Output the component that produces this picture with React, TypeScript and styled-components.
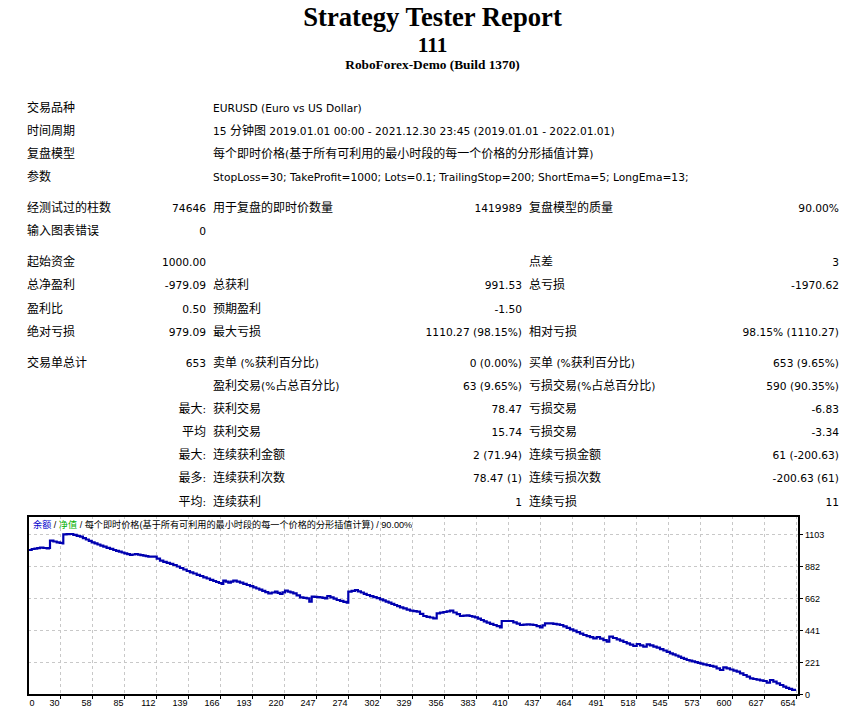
import React from "react";
import styled, { createGlobalStyle } from "styled-components";

const Global = createGlobalStyle`
  html, body { margin: 0; padding: 0; background: #ffffff; }
  body {
    font-family: "DejaVu Sans", "Noto Sans CJK SC", sans-serif;
    color: #000000;
  }
`;

const Page = styled.div`
  width: 865px;
  padding-top: 2px;
`;

const Heading = styled.div<{ $size: number; $lh: number }>`
  font-family: "Liberation Serif", "Times New Roman", serif;
  font-weight: bold;
  font-size: ${(p) => p.$size}px;
  line-height: ${(p) => p.$lh}px;
  text-align: center;
`;

const Report = styled.div`
  box-sizing: border-box;
  width: 820px;
  margin: 22px 0 0 23px;
  padding: 1px;
  display: grid;
  grid-template-columns: 120px 64px 150px 164px 150px 165px;
  gap: 1px;
  font-size: 10.67px;
  line-height: 16.15px;
`;

const Cell = styled.div<{ $span: number; $right: boolean }>`
  grid-column: span ${(p) => p.$span};
  padding: 5px 3px 1px 3px;
  text-align: ${(p) => (p.$right ? "right" : "left")};
  white-space: nowrap;
`;

const Spacer = styled.div`
  grid-column: 1 / -1;
  height: 6.7px;
`;

const Han = styled.span`
  font-family: "Noto Sans CJK SC", sans-serif;
  font-size: 12px;
  line-height: 1;
`;

const ChartBox = styled.div`
  width: 820px;
  height: 200px;
  margin-left: 23px;
`;

const ChartSvg = styled.svg`
  display: block;
  overflow: visible;
`;

const CJK = /([\u2E80-\u9FFF\uFF00-\uFFEF]+)/;

function Txt({ s }: { s: string }) {
  return (
    <>
      {s.split(CJK).map((part, i) =>
        part === "" ? null : CJK.test(part) ? <Han key={i}>{part}</Han> : <React.Fragment key={i}>{part}</React.Fragment>
      )}
    </>
  );
}

type C = { t?: string; span?: number; r?: boolean };
type Row = C[] | "gap";

const rows: Row[] = [
  [{ t: "交易品种", span: 2 }, { t: "EURUSD (Euro vs US Dollar)", span: 4 }],
  [{ t: "时间周期", span: 2 }, { t: "15 分钟图 2019.01.01 00:00 - 2021.12.30 23:45 (2019.01.01 - 2022.01.01)", span: 4 }],
  [{ t: "复盘模型", span: 2 }, { t: "每个即时价格(基于所有可利用的最小时段的每一个价格的分形插值计算)", span: 4 }],
  [{ t: "参数", span: 2 }, { t: "StopLoss=30; TakeProfit=1000; Lots=0.1; TrailingStop=200; ShortEma=5; LongEma=13;", span: 4 }],
  "gap",
  [{ t: "经测试过的柱数" }, { t: "74646", r: true }, { t: "用于复盘的即时价数量" }, { t: "1419989", r: true }, { t: "复盘模型的质量" }, { t: "90.00%", r: true }],
  [{ t: "输入图表错误" }, { t: "0", r: true }, { span: 4 }],
  "gap",
  [{ t: "起始资金" }, { t: "1000.00", r: true }, {}, {}, { t: "点差" }, { t: "3", r: true }],
  [{ t: "总净盈利" }, { t: "-979.09", r: true }, { t: "总获利" }, { t: "991.53", r: true }, { t: "总亏损" }, { t: "-1970.62", r: true }],
  [{ t: "盈利比" }, { t: "0.50", r: true }, { t: "预期盈利" }, { t: "-1.50", r: true }, {}, {}],
  [{ t: "绝对亏损" }, { t: "979.09", r: true }, { t: "最大亏损" }, { t: "1110.27 (98.15%)", r: true }, { t: "相对亏损" }, { t: "98.15% (1110.27)", r: true }],
  "gap",
  [{ t: "交易单总计" }, { t: "653", r: true }, { t: "卖单 (%获利百分比)" }, { t: "0 (0.00%)", r: true }, { t: "买单 (%获利百分比)" }, { t: "653 (9.65%)", r: true }],
  [{ span: 2 }, { t: "盈利交易(%占总百分比)" }, { t: "63 (9.65%)", r: true }, { t: "亏损交易(%占总百分比)" }, { t: "590 (90.35%)", r: true }],
  [{ t: "最大:", span: 2, r: true }, { t: "获利交易" }, { t: "78.47", r: true }, { t: "亏损交易" }, { t: "-6.83", r: true }],
  [{ t: "平均", span: 2, r: true }, { t: "获利交易" }, { t: "15.74", r: true }, { t: "亏损交易" }, { t: "-3.34", r: true }],
  [{ t: "最大:", span: 2, r: true }, { t: "连续获利金额" }, { t: "2 (71.94)", r: true }, { t: "连续亏损金额" }, { t: "61 (-200.63)", r: true }],
  [{ t: "最多:", span: 2, r: true }, { t: "连续获利次数" }, { t: "78.47 (1)", r: true }, { t: "连续亏损次数" }, { t: "-200.63 (61)", r: true }],
  [{ t: "平均:", span: 2, r: true }, { t: "连续获利" }, { t: "1", r: true }, { t: "连续亏损" }, { t: "11", r: true }],
];

/* chart geometry (local to chart box) */
const FL = 5;
const FR = 776;
const FT = 3;
const FB = 182;
const vGrid = Array.from({ length: 24 }, (_, k) => 37 + 32 * k);
const hGrid = [21, 53, 85, 117, 149];
const yLabels: [string, number][] = [
  ["1103", 21],
  ["882", 53],
  ["662", 85],
  ["441", 117],
  ["221", 149],
  ["0", 181],
];
const xLabels = ["30", "58", "85", "112", "139", "166", "193", "220", "247", "274", "302", "329", "356", "383", "410", "437", "464", "491", "518", "545", "573", "600", "627", "654"];

const curve: [number, number][] = [
  [5.3, 37], [8.7, 36], [17, 34.7], [23.7, 35.3], [26, 35], [27, 27.7], [33.7, 29.3], [39.7, 30.3],
  [40.3, 21.3], [47, 21], [57, 23.7], [68.7, 29.3], [80.3, 33.7], [90.3, 37], [107, 42], [112, 41],
  [120.3, 42.7], [125.3, 43.7], [130.3, 43.7], [137, 47.7], [150.3, 52], [163.7, 58], [177, 63],
  [190.3, 68], [198.7, 71], [200.3, 67.7], [205.3, 69.7], [210.3, 67.7], [217, 69.7], [230.3, 74.3],
  [245.3, 80.3], [252, 78.7], [257, 81], [262, 77.7], [270.3, 80.3], [277, 84.3], [283.7, 85.3],
  [286.3, 88.7], [288.7, 83.7], [297, 84.3], [302, 85.3], [304.3, 83], [313.7, 87], [323.7, 89.7],
  [325.3, 78.7], [332, 77], [343.7, 82], [357, 86.3], [377, 94.3], [387, 97.7], [393.7, 98.7],
  [400.3, 103], [410.3, 105.3], [413.7, 100.3], [427, 97.7], [437, 103], [443.7, 102.3], [452, 104.3],
  [463.7, 109.7], [477, 114.3], [478.7, 108], [487, 108], [497, 112], [503.7, 111.3], [510.3, 112],
  [517, 114.3], [522, 110.3], [527, 110.3], [537, 112], [547, 116.3], [560.3, 122], [570.3, 125.3],
  [573.7, 124], [583.7, 128.7], [586.3, 123.7], [593.7, 126.3], [603.7, 130.3], [610.3, 133],
  [613.7, 131], [620.3, 133.7], [623.7, 131.3], [633.7, 134.7], [647, 140.3], [663.7, 147],
  [680.3, 151.3], [690.3, 153.7], [697, 157], [700.3, 154.3], [713.7, 158.7], [727, 165.3],
  [740.3, 168], [743.7, 169.7], [747, 167], [760.3, 173.7], [772, 178],
];

function stairPath(pts: [number, number][]): string {
  let d = `M${pts[0][0]} ${pts[0][1]}`;
  for (let i = 1; i < pts.length; i++) {
    const [x0, y0] = pts[i - 1];
    const [x1, y1] = pts[i];
    const dx = x1 - x0;
    if (dx <= 3) {
      d += ` H${x1.toFixed(1)} V${y1.toFixed(1)}`;
      continue;
    }
    const n = Math.round(dx / 3);
    for (let s = 1; s <= n; s++) {
      const x = x0 + (dx * s) / n;
      const y = y0 + ((y1 - y0) * s) / n;
      d += ` H${x.toFixed(1)} V${y.toFixed(1)}`;
    }
  }
  return d;
}

function Chart() {
  const path = stairPath(curve);
  return (
    <ChartBox>
      <ChartSvg width={820} height={200} viewBox="0 0 820 200">
        <g stroke="#c8c8c8" strokeWidth={1} strokeDasharray="3 3" shapeRendering="crispEdges">
          {vGrid.map((x) => (
            <line key={`v${x}`} x1={x + 0.5} y1={FT} x2={x + 0.5} y2={FB} />
          ))}
          {hGrid.map((y) => (
            <line key={`h${y}`} x1={FL} y1={y + 0.5} x2={FR} y2={y + 0.5} />
          ))}
        </g>
        <g stroke="#000" strokeWidth={1} shapeRendering="crispEdges">
          {vGrid.map((x) => (
            <line key={`bt${x}`} x1={x + 0.5} y1={FB} x2={x + 0.5} y2={FB + 4} />
          ))}
          {yLabels.map(([l, y]) => (
            <line key={`rt${l}`} x1={FR} y1={y + 0.5} x2={FR + 4} y2={y + 0.5} />
          ))}
        </g>
        <path d={path} fill="none" stroke="#0000b0" strokeWidth={2.2} strokeLinejoin="miter" />
        <rect x={FL} y={FT} width={FR - FL} height={FB - FT} fill="none" stroke="#000" strokeWidth={2} shapeRendering="crispEdges" />
        <text x={10} y={15} fontFamily='"Liberation Sans", "Noto Sans CJK SC", sans-serif' fontSize={9.15} fill="#000">
          <tspan fill="#0000cc">余额</tspan>
          <tspan> / </tspan>
          <tspan fill="#00b000">净值</tspan>
          <tspan> / 每个即时价格(基于所有可利用的最小时段的每一个价格的分形插值计算) / 90.00%</tspan>
        </text>
        <g fontFamily='"Liberation Sans", sans-serif' fontSize={9} fill="#000">
          {yLabels.map(([l, y]) => (
            <text key={`yl${l}`} x={782} y={y + 3.5}>
              {l}
            </text>
          ))}
          <text x={6.5} y={193}>0</text>
          {xLabels.map((l, k) => (
            <text key={`xl${l}`} x={vGrid[k] - 0.5} y={193} textAnchor="end">
              {l}
            </text>
          ))}
        </g>
      </ChartSvg>
    </ChartBox>
  );
}

export default function App() {
  return (
    <Page>
      <Global />
      <Heading $size={26.67} $lh={31}>Strategy Tester Report</Heading>
      <Heading $size={21.33} $lh={24}>111</Heading>
      <Heading $size={13.33} $lh={16}>RoboForex-Demo (Build 1370)</Heading>
      <Report>
        {rows.map((row, i) =>
          row === "gap" ? (
            <Spacer key={i} />
          ) : (
            row.map((c, j) => (
              <Cell key={`${i}-${j}`} $span={c.span ?? 1} $right={!!c.r}>
                {c.t ? <Txt s={c.t} /> : null}
              </Cell>
            ))
          )
        )}
      </Report>
      <Chart />
    </Page>
  );
}
